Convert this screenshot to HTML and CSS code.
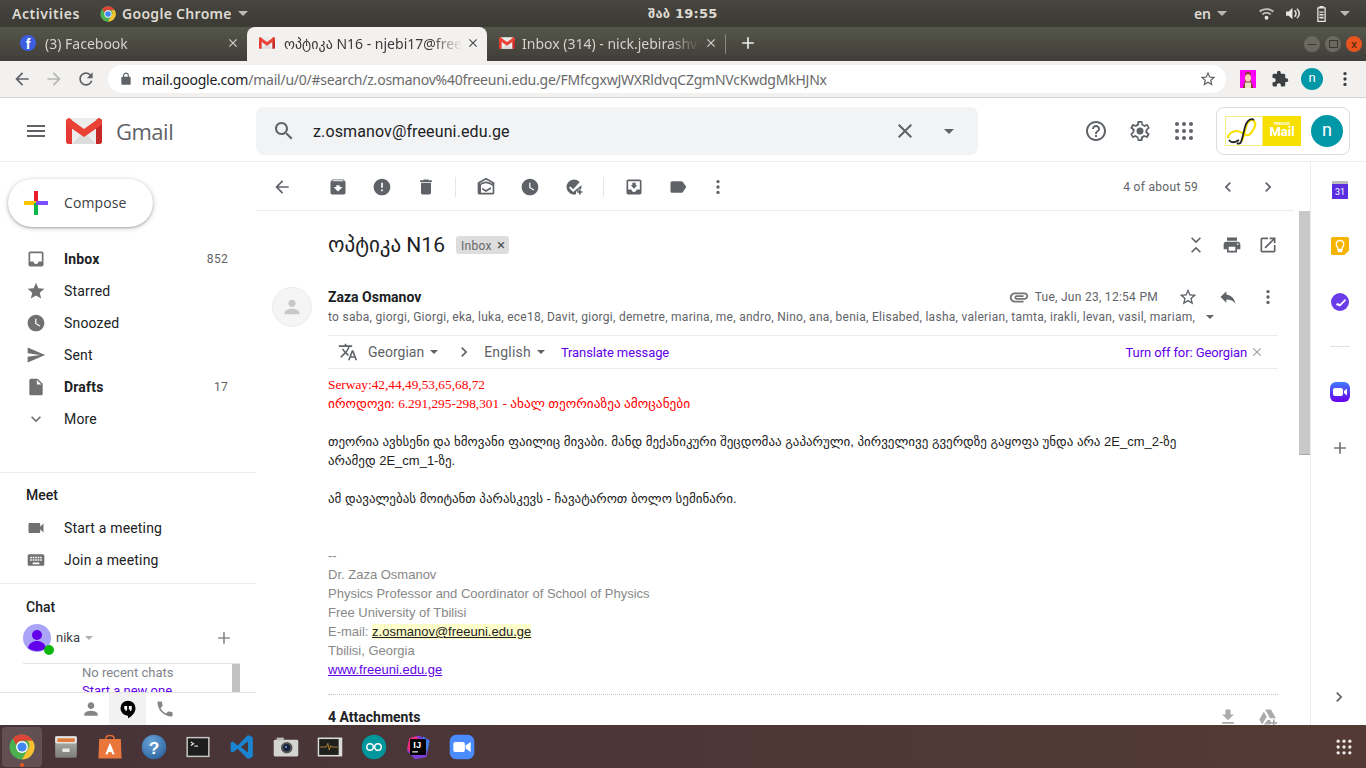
FILE: index.html
```html
<!DOCTYPE html>
<html lang="en">
<head>
    <meta charset="UTF-8">
    <title>ოპტიკა N16 - Gmail</title>
    <link rel="stylesheet" href="styles.css">
</head>
<body>
    <!-- icon sprite -->
    <svg class="sprite" xmlns="http://www.w3.org/2000/svg">
        <defs>
            <linearGradient id="zoom-grad" x1="0" y1="0" x2="0" y2="1"><stop offset="0" stop-color="#3f7bff"/><stop offset="1" stop-color="#6a00f0"/></linearGradient>
            <radialGradient id="help-grad" cx=".4" cy=".3" r=".8"><stop offset="0" stop-color="#6aa3d8"/><stop offset="1" stop-color="#2a639c"/></radialGradient>
            <linearGradient id="files-grad" x1="0" y1="0" x2="0" y2="1"><stop offset="0" stop-color="#b5b5b1"/><stop offset="1" stop-color="#7d7d79"/></linearGradient>
        </defs>
        <symbol id="i-menu" viewBox="0 0 24 24"><path d="M3 18h18v-2H3v2zm0-5h18v-2H3v2zm0-7v2h18V6H3z"/></symbol>
        <symbol id="i-search" viewBox="0 0 24 24"><path d="M15.5 14h-.79l-.28-.27C15.41 12.59 16 11.11 16 9.5 16 5.91 13.09 3 9.5 3S3 5.91 3 9.5 5.91 16 9.5 16c1.61 0 3.09-.59 4.23-1.57l.27.28v.79l5 4.99L20.49 19l-4.99-5zm-6 0C7.01 14 5 11.99 5 9.5S7.01 5 9.5 5 14 7.01 14 9.5 11.99 14 9.5 14z"/></symbol>
        <symbol id="i-close" viewBox="0 0 24 24"><path d="M19 6.41L17.59 5 12 10.59 6.41 5 5 6.41 10.59 12 5 17.59 6.41 19 12 13.41 17.59 19 19 17.59 13.41 12z"/></symbol>
        <symbol id="i-back" viewBox="0 0 24 24"><path d="M20 11H7.83l5.59-5.59L12 4l-8 8 8 8 1.41-1.41L7.83 13H20v-2z"/></symbol>
        <symbol id="i-forward" viewBox="0 0 24 24"><path d="M12 4l-1.41 1.41L16.17 11H4v2h12.17l-5.58 5.59L12 20l8-8z"/></symbol>
        <symbol id="i-refresh" viewBox="0 0 24 24"><path d="M17.65 6.35C16.2 4.9 14.21 4 12 4c-4.42 0-7.99 3.58-7.99 8s3.57 8 7.99 8c3.73 0 6.84-2.55 7.73-6h-2.08c-.82 2.33-3.04 4-5.65 4-3.31 0-6-2.69-6-6s2.69-6 6-6c1.66 0 3.14.69 4.22 1.78L13 11h7V4l-2.35 2.35z"/></symbol>
        <symbol id="i-star" viewBox="0 0 24 24"><path d="M12 17.27L18.18 21l-1.64-7.03L22 9.24l-7.19-.61L12 2 9.19 8.63 2 9.24l5.46 4.73L5.82 21z"/></symbol>
        <symbol id="i-star-o" viewBox="0 0 24 24"><path d="M22 9.24l-7.19-.62L12 2 9.19 8.63 2 9.24l5.46 4.73L5.82 21 12 17.27 18.18 21l-1.63-7.03L22 9.24zM12 15.4l-3.76 2.27 1-4.28-3.32-2.88 4.38-.38L12 6.1l1.71 4.04 4.38.38-3.32 2.88 1 4.28L12 15.4z"/></symbol>
        <symbol id="i-lock" viewBox="0 0 24 24"><path d="M18 8h-1V6c0-2.76-2.24-5-5-5S7 3.24 7 6v2H6c-1.1 0-2 .9-2 2v10c0 1.1.9 2 2 2h12c1.1 0 2-.9 2-2V10c0-1.1-.9-2-2-2zM9 6c0-1.66 1.34-3 3-3s3 1.34 3 3v2H9V6z"/></symbol>
        <symbol id="i-puzzle" viewBox="0 0 24 24"><path d="M20.5 11H19V7c0-1.1-.9-2-2-2h-4V3.5C13 2.12 11.88 1 10.5 1S8 2.12 8 3.5V5H4c-1.1 0-1.99.9-1.99 2v3.8H3.5c1.49 0 2.7 1.21 2.7 2.7s-1.21 2.7-2.7 2.7H2V20c0 1.1.9 2 2 2h3.8v-1.5c0-1.49 1.21-2.7 2.7-2.7 1.49 0 2.7 1.21 2.7 2.7V22H17c1.1 0 2-.9 2-2v-4h1.5c1.38 0 2.5-1.12 2.5-2.5S21.88 11 20.5 11z"/></symbol>
        <symbol id="i-more" viewBox="0 0 24 24"><circle cx="12" cy="5.5" r="2"/><circle cx="12" cy="12" r="2"/><circle cx="12" cy="18.5" r="2"/></symbol>
        <symbol id="i-help" viewBox="0 0 24 24"><path d="M11 18h2v-2h-2v2zm1-16C6.48 2 2 6.48 2 12s4.48 10 10 10 10-4.48 10-10S17.52 2 12 2zm0 18c-4.41 0-8-3.59-8-8s3.59-8 8-8 8 3.59 8 8-3.59 8-8 8zm0-14c-2.21 0-4 1.79-4 4h2c0-1.1.9-2 2-2s2 .9 2 2c0 2-3 1.75-3 5h2c0-2.25 3-2.5 3-5 0-2.21-1.79-4-4-4z"/></symbol>
        <symbol id="i-gear" viewBox="0 0 24 24"><path fill-rule="evenodd" d="M19.43 12.98c.04-.32.07-.64.07-.98s-.03-.66-.07-.98l2.11-1.65c.19-.15.24-.42.12-.64l-2-3.46c-.12-.22-.39-.3-.61-.22l-2.49 1c-.52-.4-1.08-.73-1.69-.98l-.38-2.65C14.46 2.18 14.25 2 14 2h-4c-.25 0-.46.18-.49.42l-.38 2.65c-.61.25-1.17.59-1.69.98l-2.49-1c-.23-.09-.49 0-.61.22l-2 3.46c-.13.22-.07.49.12.64l2.11 1.65c-.04.32-.07.65-.07.98s.03.66.07.98l-2.11 1.65c-.19.15-.24.42-.12.64l2 3.46c.12.22.39.3.61.22l2.49-1c.52.4 1.08.73 1.69.98l.38 2.65c.03.24.24.42.49.42h4c.25 0 .46-.18.49-.42l.38-2.65c.61-.25 1.17-.59 1.69-.98l2.49 1c.23.09.49 0 .61-.22l2-3.46c.12-.22.07-.49-.12-.64l-2.11-1.65zM17.4 11.2c.05.3.07.55.07.8s-.02.5-.07.8l-.14.9 2.02 1.58-.96 1.66-2.38-.96-.76.58c-.44.33-.86.58-1.28.75l-.88.36-.36 2.53h-1.9l-.36-2.53-.88-.36c-.44-.18-.86-.42-1.26-.73l-.78-.6-2.38.96-.96-1.66 2.02-1.58-.14-.9C6.52 12.5 6.5 12.24 6.5 12s.02-.5.07-.8l.14-.9-2.02-1.58.96-1.66 2.38.96.76-.58c.44-.33.86-.58 1.28-.75l.88-.36.36-2.53h1.9l.36 2.53.88.36c.44.18.86.42 1.26.73l.78.6 2.38-.96.96 1.66-2.02 1.58.14.9z"/><circle cx="12" cy="12" r="3.5"/></symbol>
        <symbol id="i-apps" viewBox="0 0 24 24"><circle cx="5" cy="5" r="2"/><circle cx="12" cy="5" r="2"/><circle cx="19" cy="5" r="2"/><circle cx="5" cy="12" r="2"/><circle cx="12" cy="12" r="2"/><circle cx="19" cy="12" r="2"/><circle cx="5" cy="19" r="2"/><circle cx="12" cy="19" r="2"/><circle cx="19" cy="19" r="2"/></symbol>
        <symbol id="i-inbox" viewBox="0 0 24 24"><path d="M19 3H5c-1.1 0-2 .9-2 2v14c0 1.1.9 2 2 2h14c1.1 0 2-.9 2-2V5c0-1.1-.9-2-2-2zm0 12h-4c0 1.66-1.34 3-3 3s-3-1.34-3-3H5V5h14v10z"/></symbol>
        <symbol id="i-clock" viewBox="0 0 24 24"><path d="M12 2C6.5 2 2 6.5 2 12s4.5 10 10 10 10-4.5 10-10S17.5 2 12 2zm4.2 14.2L11 13V7h1.5v5.2l4.5 2.7-.8 1.3z"/></symbol>
        <symbol id="i-send" viewBox="0 0 24 24"><path d="M2.01 21L23 12 2.01 3 2 10l15 2-15 2z"/></symbol>
        <symbol id="i-file" viewBox="0 0 24 24"><path d="M6 2c-1.1 0-1.99.9-1.99 2L4 20c0 1.1.89 2 1.99 2H18c1.1 0 2-.9 2-2V8l-6-6H6zm7 7V3.5L18.5 9H13z"/></symbol>
        <symbol id="i-expand" viewBox="0 0 24 24"><path d="M16.59 8.59L12 13.17 7.41 8.59 6 10l6 6 6-6z"/></symbol>
        <symbol id="i-left" viewBox="0 0 24 24"><path d="M15.41 7.41L14 6l-6 6 6 6 1.41-1.41L10.83 12z"/></symbol>
        <symbol id="i-right" viewBox="0 0 24 24"><path d="M10 6L8.59 7.41 13.17 12l-4.58 4.59L10 18l6-6z"/></symbol>
        <symbol id="i-video" viewBox="0 0 24 24"><path d="M17 10.5V7c0-.55-.45-1-1-1H4c-.55 0-1 .45-1 1v10c0 .55.45 1 1 1h12c.55 0 1-.45 1-1v-3.5l4 4v-11l-4 4z"/></symbol>
        <symbol id="i-keyboard" viewBox="0 0 24 24"><path d="M20 5H4c-1.1 0-1.99.9-1.99 2L2 17c0 1.1.9 2 2 2h16c1.1 0 2-.9 2-2V7c0-1.1-.9-2-2-2zm-9 3h2v2h-2V8zm0 3h2v2h-2v-2zM8 8h2v2H8V8zm0 3h2v2H8v-2zm-1 2H5v-2h2v2zm0-3H5V8h2v2zm9 7H8v-2h8v2zm0-4h-2v-2h2v2zm0-3h-2V8h2v2zm3 3h-2v-2h2v2zm0-3h-2V8h2v2z"/></symbol>
        <symbol id="i-person" viewBox="0 0 24 24"><path d="M12 12c2.21 0 4-1.79 4-4s-1.79-4-4-4-4 1.79-4 4 1.79 4 4 4zm0 2c-2.67 0-8 1.34-8 4v2h16v-2c0-2.66-5.33-4-8-4z"/></symbol>
        <symbol id="i-phone" viewBox="0 0 24 24"><path d="M6.62 10.79c1.44 2.83 3.76 5.14 6.59 6.59l2.2-2.2c.27-.27.67-.36 1.02-.24 1.12.37 2.33.57 3.57.57.55 0 1 .45 1 1V20c0 .55-.45 1-1 1-9.39 0-17-7.61-17-17 0-.55.45-1 1-1h3.5c.55 0 1 .45 1 1 0 1.25.2 2.45.57 3.57.11.35.03.74-.25 1.02l-2.2 2.2z"/></symbol>
        <symbol id="i-plus" viewBox="0 0 24 24"><path d="M19 13h-6v6h-2v-6H5v-2h6V5h2v6h6v2z"/></symbol>
        <symbol id="i-archive" viewBox="0 0 24 24"><path d="M20.54 5.23l-1.39-1.68C18.88 3.21 18.47 3 18 3H6c-.47 0-.88.21-1.16.55L3.46 5.23C3.17 5.57 3 6.02 3 6.5V19c0 1.1.9 2 2 2h14c1.1 0 2-.9 2-2V6.5c0-.48-.17-.93-.46-1.27zM12 17.5L6.5 12H10v-2h4v2h3.5L12 17.5zM5.12 5l.81-1h12l.94 1H5.12z"/></symbol>
        <symbol id="i-report" viewBox="0 0 24 24"><path d="M12 2C6.48 2 2 6.48 2 12s4.48 10 10 10 10-4.48 10-10S17.52 2 12 2zm1 15h-2v-2h2v2zm0-4h-2V7h2v6z"/></symbol>
        <symbol id="i-delete" viewBox="0 0 24 24"><path d="M6 19c0 1.1.9 2 2 2h8c1.1 0 2-.9 2-2V7H6v12zM19 4h-3.5l-1-1h-5l-1 1H5v2h14V4z"/></symbol>
        <symbol id="i-drafts" viewBox="0 0 24 24"><path d="M12 1L2 6.6V19c0 1.1.9 2 2 2h16c1.1 0 2-.9 2-2V6.6L12 1zm0 2.3l7.6 4.2-.6.5c-1.9-1.3-4.4-2.5-7-2.500S6.9 6.7 5 8l-.6-.5L12 3.3zM20 19H6V9.7c1.8-1.2 3.9-2.200 6-2.200s4.800 1.100 8 3.200V19zm-2-7l-6 3.600L7.500 13v2.200l4.500 2.700 6-3.600V12z"/></symbol>
        <symbol id="i-addtask" viewBox="0 0 24 24"><path d="M12 3a9 9 0 1 0 2.500 17.650V17h3v-2.500h2.900c.4-.8.6-1.600.6-2.500 0-.7-.1-1.300-.2-2L11 18l-5-5 1.700-1.700 3.300 3.300 7.900-8.500A9 9 0 0 0 12 3zM18 17v-2h2v2h2v2h-2v2h-2v-2h-2v-2h2z"/></symbol>
        <symbol id="i-moveto" viewBox="0 0 24 24"><path d="M19 3H4.990c-1.110 0-1.980.89-1.980 2L3 19c0 1.100.88 2 1.990 2H19c1.100 0 2-.9 2-2V5c0-1.110-.9-2-2-2zm0 12h-4c0 1.660-1.350 3-3 3s-3-1.340-3-3H4.990V5H19v10zm-3-5h-2V7h-4v3H8l4 4 4-4z"/></symbol>
        <symbol id="i-label" viewBox="0 0 24 24"><path d="M17.630 5.840C17.270 5.330 16.670 5 16 5L5 5.010C3.900 5.010 3 5.900 3 7v10c0 1.100.9 1.990 2 1.990L16 19c.67 0 1.270-.33 1.630-.84L22 12l-4.370-6.160z"/></symbol>
        <symbol id="i-reply" viewBox="0 0 24 24"><path d="M10 9V5l-7 7 7 7v-4.100c5 0 8.500 1.600 11 5.100-1-5-4-10-11-11z"/></symbol>
        <symbol id="i-print" viewBox="0 0 24 24"><path d="M19 8H5c-1.660 0-3 1.340-3 3v6h4v4h12v-4h4v-6c0-1.660-1.340-3-3-3zm-3 11H8v-5h8v5zm3-7c-.55 0-1-.45-1-1s.45-1 1-1 1 .45 1 1-.45 1-1 1zm-1-9H6v4h12V3z"/></symbol>
        <symbol id="i-open" viewBox="0 0 24 24"><path d="M19 19H5V5h7V3H5c-1.110 0-2 .9-2 2v14c0 1.100.89 2 2 2h14c1.100 0 2-.9 2-2v-7h-2v7zM14 3v2h3.590l-9.830 9.830 1.410 1.410L19 6.410V10h2V3h-7z"/></symbol>
        <symbol id="i-clip" viewBox="0 0 24 24"><path d="M2 12.500C2 9.460 4.460 7 7.500 7H18c2.210 0 4 1.790 4 4s-1.790 4-4 4H9.500C8.120 15 7 13.880 7 12.500S8.120 10 9.500 10H17v2H9.410c-.55 0-.55 1 0 1H18c1.100 0 2-.9 2-2s-.9-2-2-2H7.500C5.570 9 4 10.570 4 12.500S5.570 16 7.500 16H17v2H7.500C4.460 18 2 15.540 2 12.500z"/></symbol>
        <symbol id="i-translate" viewBox="0 0 24 24"><path d="M12.870 15.070l-2.540-2.510.03-.03c1.740-1.940 2.980-4.170 3.710-6.530H17V4h-7V2H8v2H1v1.990h11.170C11.500 7.920 10.440 9.750 9 11.350 8.070 10.320 7.300 9.190 6.690 8h-2c.73 1.630 1.730 3.170 2.980 4.560l-5.090 5.020L4 19l5-5 3.110 3.110.76-2.040zM18.500 10h-2L12 22h2l1.120-3h4.750L21 22h2l-4.500-12zm-2.620 7l1.620-4.330L19.120 17h-3.240z"/></symbol>
        <symbol id="i-download" viewBox="0 0 24 24"><path d="M19 9h-4V3H9v6H5l7 7 7-7zM5 18v2h14v-2H5z"/></symbol>
        <symbol id="i-drive" viewBox="0 0 24 24"><path d="M8.500 3h7l6 10.500h-7zM7 5.600l3.500 6L5 21l-3.500-6zM11.500 15.500H15V21H7zM18 15h2v3h3v2h-3v3h-2v-3h-3v-2h3z"/></symbol>
        <symbol id="i-m" viewBox="0 0 36 26"><path fill="#ececec" d="M3 0h30v26H3z"/><path fill="#dcdcdc" d="M6 26L18 14l12 12z"/><path fill="#e53935" d="M0 3C0 1 2 0 3.500 .3L6 2v24H2.500C1 26 0 25 0 23.500z"/><path fill="#c62828" d="M36 3c0-2-2-3-3.500-2.700L30 2v24h3.500c1.500 0 2.500-1 2.500-2.500z"/><path fill="#ea4335" d="M3 .2L18 11 33 .2 36 3v3.500L18 19 0 6.500V3z"/></symbol>
        <symbol id="i-chrome" viewBox="0 0 48 48"><circle cx="24" cy="24" r="23" fill="#4caf50"/><path fill="#db4437" d="M24 1a23 23 0 0 1 20 11.500H24a11.500 11.500 0 0 0-10.800 7.600L7 8A23 23 0 0 1 24 1z"/><path fill="#fbc02d" d="M44 12.500A23 23 0 0 1 24 47l9.800-17a11.500 11.500 0 0 0 0-17.500z"/><circle cx="24" cy="24" r="11" fill="#fff"/><circle cx="24" cy="24" r="8.500" fill="#4285f4"/></symbol>
    </svg>

    <div class="topbar">
        <span class="activities">Activities</span>
        <span class="app-menu">
            <svg class="app-chrome"><use href="#i-chrome"/></svg>
            <span class="app-name">Google Chrome</span>
            <span class="tri"></span>
        </span>
        <span class="clock">შაბ 19:55</span>
        <span class="tray">
            <span class="lang">en</span>
            <span class="tri"></span>
            <svg class="tray-wifi" viewBox="0 0 16 16"><path d="M8 3C5 3 2.500 4 1 5.500L2.200 7C3.600 5.700 5.700 4.800 8 4.800s4.400.9 5.800 2.200L15 5.500C13.500 4 11 3 8 3zM8 6.500c-1.800 0-3.300.6-4.400 1.700L4.800 9.600C5.700 8.800 6.800 8.300 8 8.300s2.300.5 3.200 1.300l1.200-1.400C11.300 7.100 9.800 6.500 8 6.500z" opacity=".75"/><circle cx="8" cy="12" r="1.800"/></svg>
            <svg class="tray-vol" viewBox="0 0 16 16"><path d="M1 6h2.500L7 2.500v11L3.500 10H1z"/><path d="M9 5c1 .8 1.400 1.800 1.400 3s-.4 2.200-1.400 3M11.200 3.500c1.500 1.200 2.200 2.700 2.200 4.500s-.7 3.300-2.200 4.500" fill="none" stroke="#e8e6e1" stroke-width="1.400"/></svg>
            <svg class="tray-bat" viewBox="0 0 16 16"><path fill-rule="evenodd" d="M6 1h4v1h2v14H4V2h2zM5.200 3.200v11.600h5.600V3.200z"/><path d="M6 6h4v1.400H6zM6 8.500h4v1.400H6zM6 11h4v1.600H6z"/></svg>
            <span class="tri"></span>
        </span>
    </div>

    <div class="tabstrip">
        <div class="tab tab-fb">
            <span class="fav-fb">f</span>
            <span class="tab-title">(3) Facebook</span>
            <svg class="ic tab-x"><use href="#i-close"/></svg>
        </div>
        <div class="tab tab-active">
            <svg class="fav-m"><use href="#i-m"/></svg>
            <span class="tab-title">ოპტიკა N16 - njebi17@freeuni.edu.ge</span>
            <svg class="ic tab-x"><use href="#i-close"/></svg>
        </div>
        <div class="tab tab-third">
            <svg class="fav-m"><use href="#i-m"/></svg>
            <span class="tab-title">Inbox (314) - nick.jebirashvili@gmail.com</span>
            <svg class="ic tab-x"><use href="#i-close"/></svg>
        </div>
        <span class="tab-sep"></span>
        <svg class="ic new-tab"><use href="#i-plus"/></svg>
        <div class="win-btns">
            <span class="win-btn"><i class="w-min"></i></span>
            <span class="win-btn"><i class="w-max"></i></span>
            <span class="win-btn win-close">x</span>
        </div>
    </div>

    <div class="toolbar">
        <svg class="ic nav-btn"><use href="#i-back"/></svg>
        <svg class="ic nav-btn nav-off"><use href="#i-forward"/></svg>
        <svg class="ic nav-btn"><use href="#i-refresh"/></svg>
        <div class="omnibox">
            <svg class="ic omni-lock"><use href="#i-lock"/></svg>
            <span class="url"><b>mail.google.com</b>/mail/u/0/#search/z.osmanov%40freeuni.edu.ge/FMfcgxwJWXRldvqCZgmNVcKwdgMkHJNx</span>
            <svg class="ic omni-star"><use href="#i-star-o"/></svg>
        </div>
        <span class="ext-pic">
            <svg viewBox="0 0 16 18"><rect width="16" height="18" fill="#f0f"/><path d="M3 18c0-3 1-5 2-6V6c0-3 1.500-4.500 3-4.500S11 3 11 6v6c1 1 2 3 2 6z" fill="#8c3b2e"/><ellipse cx="8" cy="8" rx="3" ry="3.800" fill="#f4d3b8"/><rect x="5" y="12.500" width="6" height="5.500" fill="#e8e2c8"/></svg>
        </span>
        <svg class="ic ext-puzzle"><use href="#i-puzzle"/></svg>
        <span class="chrome-avatar">n</span>
        <svg class="ic chrome-more"><use href="#i-more"/></svg>
    </div>

    <div class="gmail">
        <header class="g-head">
            <svg class="ic g-menu"><use href="#i-menu"/></svg>
            <svg class="g-logo"><use href="#i-m"/></svg>
            <span class="g-word">Gmail</span>
            <div class="g-search">
                <svg class="ic"><use href="#i-search"/></svg>
                <span class="g-query">z.osmanov@freeuni.edu.ge</span>
                <svg class="ic g-clear"><use href="#i-close"/></svg>
                <span class="g-caret"></span>
            </div>
            <svg class="ic g-act g-help"><use href="#i-help"/></svg>
            <svg class="ic g-act"><use href="#i-gear"/></svg>
            <svg class="ic g-act"><use href="#i-apps"/></svg>
            <div class="g-account">
                <div class="fu-logo">
                    <span class="fu-mark">
                        <svg viewBox="0 0 36 28"><path d="M2 21c0-4 4-7 9-7 6 0 9 8 14 2 4-5 6-9 3-12-2-2-5-1-7 3-2 5-3 12-5 17" fill="none" stroke="#f7e000" stroke-width="2.200"/><path d="M28 3c-3-2-6 0-8 4-2 5-3 13-5 18-1 2-3 2-4 1M3 23c2 3 6 3 10 0" fill="none" stroke="#222" stroke-width="1.800"/></svg>
                    </span>
                    <span class="fu-mail"><small>FREEUNI</small>Mail</span>
                </div>
                <span class="acc-avatar">n</span>
            </div>
        </header>

        <div class="g-main">
            <aside class="sidebar">
                <div class="compose">
                    <svg class="compose-plus" viewBox="0 0 24 24"><rect x="10" width="4" height="12" fill="#ea1d2c"/><rect y="10" width="12" height="4" fill="#fbc400"/><rect x="10" y="12" width="4" height="12" fill="#0ab54a"/><rect x="12" y="10" width="12" height="4" fill="#7c4dff"/></svg>
                    <span>Compose</span>
                </div>
                <nav class="nav">
                    <a class="nav-row strong"><svg class="ic"><use href="#i-inbox"/></svg><span>Inbox</span><em>852</em></a>
                    <a class="nav-row"><svg class="ic"><use href="#i-star"/></svg><span>Starred</span></a>
                    <a class="nav-row"><svg class="ic"><use href="#i-clock"/></svg><span>Snoozed</span></a>
                    <a class="nav-row"><svg class="ic"><use href="#i-send"/></svg><span>Sent</span></a>
                    <a class="nav-row strong"><svg class="ic"><use href="#i-file"/></svg><span>Drafts</span><em>17</em></a>
                    <a class="nav-row"><svg class="ic"><use href="#i-expand"/></svg><span>More</span></a>
                </nav>
                <div class="meet">
                    <h3>Meet</h3>
                    <a class="nav-row"><svg class="ic"><use href="#i-video"/></svg><span>Start a meeting</span></a>
                    <a class="nav-row"><svg class="ic"><use href="#i-keyboard"/></svg><span>Join a meeting</span></a>
                </div>
                <div class="chat">
                    <h3>Chat</h3>
                    <div class="chat-me">
                        <span class="me-pic">
                            <svg viewBox="0 0 28 28"><circle cx="14" cy="14" r="14" fill="#a9a4f7"/><circle cx="14" cy="11" r="5" fill="#6200ea"/><path d="M5 24c1-5 5-7 9-7s8 2 9 7c-2.500 2-5.500 3-9 3s-6.500-1-9-3z" fill="#6200ea"/></svg>
                            <i class="me-dot"></i>
                        </span>
                        <span class="me-name">nika</span>
                        <span class="me-caret"></span>
                        <svg class="ic me-add"><use href="#i-plus"/></svg>
                    </div>
                    <div class="chat-list">
                        <div class="chat-msgs">
                            <p>No recent chats</p>
                            <a>Start a new one</a>
                        </div>
                        <span class="chat-scroll"></span>
                    </div>
                </div>
                <div class="side-tabs">
                    <span><svg class="ic"><use href="#i-person"/></svg></span>
                    <span class="on">
                        <svg viewBox="0 0 24 24"><path d="M12 2a9 9 0 0 0-9 9c0 5 4 8.500 9 9v3c5-2.500 9-7 9-12a9 9 0 0 0-9-9z" fill="#000"/><path d="M7.500 8.500h3.500v3.500c0 1.500-.8 2.500-2 2.800v-2.300H7.500zM13 8.500h3.500v3.500c0 1.500-.8 2.500-2 2.800v-2.300H13z" fill="#fff"/></svg>
                    </span>
                    <span><svg class="ic"><use href="#i-phone"/></svg></span>
                </div>
            </aside>

            <main class="content">
                <div class="actions">
                    <span class="btn btn-back"><svg class="ic"><use href="#i-back"/></svg></span>
                    <span class="btn"><svg class="ic"><use href="#i-archive"/></svg></span>
                    <span class="btn"><svg class="ic"><use href="#i-report"/></svg></span>
                    <span class="btn"><svg class="ic"><use href="#i-delete"/></svg></span>
                    <span class="act-sep"></span>
                    <span class="btn"><svg class="ic"><use href="#i-drafts"/></svg></span>
                    <span class="btn"><svg class="ic"><use href="#i-clock"/></svg></span>
                    <span class="btn"><svg class="ic"><use href="#i-addtask"/></svg></span>
                    <span class="act-sep"></span>
                    <span class="btn"><svg class="ic"><use href="#i-moveto"/></svg></span>
                    <span class="btn"><svg class="ic"><use href="#i-label"/></svg></span>
                    <span class="btn btn-more"><svg class="ic"><use href="#i-more"/></svg></span>
                    <span class="count">4 of about 59</span>
                    <span class="btn btn-page"><svg class="ic"><use href="#i-left"/></svg></span>
                    <span class="btn btn-page"><svg class="ic"><use href="#i-right"/></svg></span>
                </div>

                <div class="thread-wrap">
                    <div class="thread">
                        <div class="subject-row">
                            <h2>ოპტიკა N16</h2>
                            <span class="chip">Inbox <i>×</i></span>
                            <span class="sub-tools">
                                <svg class="ic collapse" viewBox="0 0 24 24"><path d="M7.400 2.600L6 4l6 6 6-6-1.400-1.400L12 7.200zM7.400 21.400L6 20l6-6 6 6-1.400 1.400L12 16.800z"/></svg>
                                <svg class="ic"><use href="#i-print"/></svg>
                                <svg class="ic"><use href="#i-open"/></svg>
                            </span>
                        </div>

                        <div class="message">
                            <span class="sender-pic"><svg class="ic"><use href="#i-person"/></svg></span>
                            <div class="msg-main">
                                <div class="from-row">
                                    <b class="sender">Zaza Osmanov</b>
                                    <svg class="ic clip"><use href="#i-clip"/></svg>
                                    <span class="date">Tue, Jun 23, 12:54 PM</span>
                                    <svg class="ic msg-star"><use href="#i-star-o"/></svg>
                                    <svg class="ic msg-reply"><use href="#i-reply"/></svg>
                                    <svg class="ic msg-more"><use href="#i-more"/></svg>
                                </div>
                                <div class="to-row">
                                    <span>to saba, giorgi, Giorgi, eka, luka, ece18, Davit, giorgi, demetre, marina, me, andro, Nino, ana, benia, Elisabed, lasha, valerian, tamta, irakli, levan, vasil, mariam,</span>
                                    <i class="to-caret"></i>
                                </div>

                                <div class="translate">
                                    <svg class="ic tr-icon"><use href="#i-translate"/></svg>
                                    <span class="tr-lang tr-from">Georgian</span><i class="tr-caret"></i>
                                    <svg class="ic tr-arrow"><use href="#i-right"/></svg>
                                    <span class="tr-lang tr-to">English</span><i class="tr-caret"></i>
                                    <a class="tr-link">Translate message</a>
                                    <a class="tr-link tr-off">Turn off for: Georgian</a>
                                    <svg class="ic tr-x"><use href="#i-close"/></svg>
                                </div>

                                <div class="body">
                                    <div class="red">Serway:42,44,49,53,65,68,72<br>იროდოვი: 6.291,295-298,301 - ახალ თეორიაზეა ამოცანები</div>
                                    <br>
                                    <div>თეორია ავხსენი და ხმოვანი ფაილიც მივაბი. მანდ მექანიკური შეცდომაა გაპარული, პირველივე გვერდზე გაყოფა უნდა არა 2E_cm_2-ზე<br>არამედ 2E_cm_1-ზე.</div>
                                    <br>
                                    <div>ამ დავალებას მოიტანთ პარასკევს - ჩავატაროთ ბოლო სემინარი.</div>
                                    <br><br>
                                    <div class="sig">
                                        --<br>
                                        Dr. Zaza Osmanov<br>
                                        Physics Professor and Coordinator of School of Physics<br>
                                        Free University of Tbilisi<br>
                                        E-mail: <a class="hl">z.osmanov@freeuni.edu.ge</a><br>
                                        Tbilisi, Georgia<br>
                                        <a class="site">www.freeuni.edu.ge</a>
                                    </div>
                                </div>

                                <div class="attach">
                                    <b>4 Attachments</b>
                                    <svg class="ic att-dl"><use href="#i-download"/></svg>
                                    <svg class="ic att-drive"><use href="#i-drive"/></svg>
                                </div>
                            </div>
                        </div>
                    </div>
                    <div class="scroll-track"><span class="scroll-thumb"></span></div>
                </div>
            </main>

            <aside class="addons">
                <span class="addon">
                    <svg viewBox="0 0 16 18"><rect y="0" width="16" height="5" fill="#bdbdbd"/><rect y="3" width="16" height="15" fill="#5a2de0"/><text x="8" y="14" text-anchor="middle" class="cal-num">31</text></svg>
                </span>
                <span class="addon">
                    <svg viewBox="0 0 16 16"><path d="M0 1.500C0 .7.700 0 1.500 0h13c.8 0 1.500.7 1.500 1.500V12l-4 4H1.500C.7 16 0 15.300 0 14.500z" fill="#f4b400"/><path d="M8 3a3.500 3.500 0 0 0-2 6.300V11h4V9.300A3.500 3.500 0 0 0 8 3zM6.500 12h3v1h-3z" fill="none" stroke="#fff" stroke-width="1"/></svg>
                </span>
                <span class="addon">
                    <svg viewBox="0 0 18 18"><circle cx="9" cy="9" r="9" fill="#6a3de8"/><path d="M5 12l1-2 3 1 5-5 1 1.500-6 6z" fill="#fff"/></svg>
                </span>
                <span class="addon-hr"></span>
                <span class="addon addon-zoom">
                    <svg viewBox="0 0 20 20"><rect width="20" height="20" rx="6" fill="url(#zoom-grad)"/><rect x="3" y="6" width="10" height="8" rx="2" fill="#fff"/><path d="M14 9l3-2.500v7L14 11z" fill="#fff"/></svg>
                </span>
                <svg class="ic addon-plus"><use href="#i-plus"/></svg>
                <svg class="ic addon-chev"><use href="#i-right"/></svg>
            </aside>
        </div>
    </div>

    <div class="dock">
        <span class="dock-item dock-on"><svg><use href="#i-chrome"/></svg><i class="dock-dot"></i></span>
        <span class="dock-item">
            <svg viewBox="0 0 36 36"><rect x="3" y="3" width="30" height="30" rx="3" fill="url(#files-grad)"/><rect x="3" y="3" width="30" height="10" rx="2" fill="#e2e2e0"/><rect x="6" y="6" width="24" height="5" fill="#e07a3a"/><rect x="13" y="20" width="10" height="5" rx="1" fill="#e8e8e6"/></svg>
        </span>
        <span class="dock-item">
            <svg viewBox="0 0 36 36"><path d="M12 10V7c0-3 2-5 6-5s6 2 6 5v3" fill="none" stroke="#e06b33" stroke-width="2"/><path d="M3 7h30l1 27H2z" fill="#e9773c"/><path d="M18 12l6.500 16h-3.500l-1-3h-4l-1 3h-3.500z" fill="#fff"/></svg>
        </span>
        <span class="dock-item">
            <svg viewBox="0 0 36 36"><circle cx="18" cy="18" r="17" fill="url(#help-grad)"/><text x="18" y="27" text-anchor="middle" class="help-q">?</text></svg>
        </span>
        <span class="dock-item">
            <svg viewBox="0 0 36 36"><rect x="2" y="4" width="32" height="28" fill="#c9c9c6"/><rect x="4" y="6" width="28" height="24" fill="#1d1d1d"/><path d="M8 11l4 2.500L8 16" fill="none" stroke="#eee" stroke-width="1.500"/><rect x="13" y="16" width="5" height="1.500" fill="#eee"/></svg>
        </span>
        <span class="dock-item">
            <svg viewBox="0 0 24 24"><path d="M17.500 1L8 10.500 3.500 7 1.500 8v8l2 1L8 13.500 17.500 23l4.500-2V3zM17.500 7v10L11 12z" fill="#1a84d0" fill-rule="evenodd"/></svg>
        </span>
        <span class="dock-item">
            <svg viewBox="0 0 36 36"><rect x="1" y="8" width="34" height="23" rx="2" fill="#d4d4d2"/><rect x="5" y="5" width="10" height="4" fill="#bcbcba"/><circle cx="19" cy="19" r="8" fill="#555"/><circle cx="19" cy="19" r="5" fill="#16233a"/><circle cx="18" cy="18" r="1.500" fill="#7fa2d6"/></svg>
        </span>
        <span class="dock-item">
            <svg viewBox="0 0 36 36"><rect x="1" y="5" width="34" height="26" rx="1" fill="#dcdcd8"/><rect x="3" y="7" width="27" height="22" fill="#20201e"/><path d="M4 18h9l2-5 2 9 2-6 1 2h9" fill="none" stroke="#d8a23c" stroke-width="1"/></svg>
        </span>
        <span class="dock-item">
            <svg viewBox="0 0 36 36"><circle cx="18" cy="18" r="17" fill="#00979c"/><circle cx="12.500" cy="18" r="4.500" fill="none" stroke="#fff" stroke-width="2"/><circle cx="23.500" cy="18" r="4.500" fill="none" stroke="#fff" stroke-width="2"/></svg>
        </span>
        <span class="dock-item">
            <svg viewBox="0 0 36 36"><path d="M6 6l12-4 16 6-4 24-16 3L3 24z" fill="#7a3fd6"/><path d="M3 20L6 6l10-3 4 6-14 16z" fill="#f02d74"/><path d="M25 3l9 7-3 14-6-2z" fill="#3d7fe8"/><rect x="7" y="7" width="22" height="22" fill="#000"/><text x="17" y="20" text-anchor="middle" class="ij">IJ</text><rect x="10" y="24" width="8" height="1.500" fill="#fff"/></svg>
        </span>
        <span class="dock-item">
            <svg viewBox="0 0 36 36"><rect x="1" y="1" width="34" height="34" rx="9" fill="#4a8cff"/><rect x="6" y="11" width="16" height="14" rx="3" fill="#fff"/><path d="M23 16l7-5v14l-7-5z" fill="#fff"/></svg>
        </span>
        <svg class="ic dock-grid"><use href="#i-apps"/></svg>
    </div>
</body>
</html>
```

FILE: styles.css
```css
/* base */
html, body {
    margin: 0;
    height: 768px;
    width: 1366px;
    overflow: hidden;
}
body {
    display: flex;
    flex-direction: column;
    font-family: Roboto, "DejaVu Sans", sans-serif;
    color: #202124;
    background: #fff;
}
.sprite {
    position: absolute;
    width: 0;
    height: 0;
}
.ic {
    width: 20px;
    height: 20px;
    fill: #5f6368;
    flex: none;
}
a, i, em {
    font-style: normal;
}

/* ubuntu top bar */
.topbar {
    height: 27px;
    flex: none;
    display: flex;
    align-items: center;
    background: linear-gradient(#46453f, #3b3a35);
    color: #dfdbd2;
    font-family: "Noto Sans", "DejaVu Sans", sans-serif;
    font-size: 14px;
    font-weight: 600;
    position: relative;
}
.activities {
    margin-left: 12px;
    width: 88px;
    letter-spacing: .55px;
}
.app-menu {
    display: flex;
    align-items: center;
    gap: 6px;
}
.app-name {
    letter-spacing: .3px;
}
.app-chrome {
    width: 16px;
    height: 16px;
}
.tri {
    width: 0;
    height: 0;
    border-left: 5px solid transparent;
    border-right: 5px solid transparent;
    border-top: 5px solid #bdbab2;
}
.clock {
    position: absolute;
    left: 648px;
    font-family: "DejaVu Sans", sans-serif;
    font-size: 13px;
    letter-spacing: .2px;
}
.tray {
    margin-left: auto;
    display: flex;
    align-items: center;
    margin-right: 16px;
}
.lang {
    margin-right: 6px;
}
.tray svg {
    width: 17px;
    height: 17px;
    fill: #e8e6e1;
}
.tray-wifi {
    margin-left: 31px;
}
.tray-vol {
    margin-left: 10px;
}
.tray-bat {
    margin-left: 11px;
    margin-right: 10px;
}

/* chrome tabs */
.tabstrip {
    height: 34px;
    flex: none;
    display: flex;
    align-items: stretch;
    background: linear-gradient(#55564a, #3f3e39);
    font-family: "Noto Sans", "DejaVu Sans", sans-serif;
    font-size: 14px;
    color: #d3d2cd;
}
.tab {
    width: 240px;
    display: flex;
    align-items: center;
    flex: none;
    box-sizing: border-box;
    padding: 0 7px 2px 12px;
}
.tab-fb {
    width: 239px;
    margin-left: 8px;
}
.tab-third {
    width: 238px;
}
.tab-third .tab-title {
    margin-left: 7px;
}
.tab-active {
    background: #f2f1f0;
    color: #3b3a39;
    border-radius: 8px 8px 0 0;
}
.tab-title {
    flex: 1;
    overflow: hidden;
    white-space: nowrap;
    margin-left: 9px;
    -webkit-mask-image: linear-gradient(to left, transparent 0, #000 30px);
    mask-image: linear-gradient(to left, transparent 0, #000 30px);
}
.tab-x {
    width: 14px;
    height: 14px;
    fill: #d3d2cd;
    margin-left: 4px;
}
.tab-active .tab-x {
    fill: #4a4a4a;
}
.fav-fb {
    width: 16px;
    height: 16px;
    flex: none;
    border-radius: 50%;
    background: #3b5de0;
    color: #fff;
    font: bold 14px/18px "Liberation Sans", sans-serif;
    text-align: center;
    overflow: hidden;
}
.fav-m {
    width: 16px;
    height: 12px;
    flex: none;
}
.tab-sep {
    width: 1px;
    height: 20px;
    margin: 7px 0 0 0;
    background: #8a8a80;
}
.new-tab {
    width: 20px;
    height: 20px;
    fill: #eee;
    margin: 6px 0 0 12px;
}
.win-btns {
    margin-left: auto;
    display: flex;
    gap: 3px;
    align-items: center;
    margin-right: 3px;
}
.win-btn {
    width: 18px;
    height: 18px;
    border-radius: 50%;
    background: #6a6a60;
    border: 1px solid #4a4a44;
    box-sizing: border-box;
    display: flex;
    align-items: center;
    justify-content: center;
}
.win-close {
    background: #e8541e;
    color: #5c2a10;
    font: bold 10px "Liberation Sans", sans-serif;
}
.w-min {
    width: 8px;
    height: 1px;
    background: #38382f;
}
.w-max {
    width: 7px;
    height: 6px;
    border: 1px solid #38382f;
}

/* chrome toolbar */
.toolbar {
    height: 37px;
    flex: none;
    box-sizing: border-box;
    display: flex;
    align-items: center;
    background: #f2f1f0;
    border-bottom: 1px solid #d4d4d2;
    padding-left: 12px;
}
.nav-btn {
    margin-right: 12px;
}
.nav-off {
    fill: #b5b5b3;
}
.omnibox {
    width: 1118px;
    height: 28px;
    background: #fff;
    border-radius: 14px;
    display: flex;
    align-items: center;
    box-sizing: border-box;
    padding: 0 9px 0 11px;
    flex: none;
}
.omni-lock {
    width: 14px;
    height: 14px;
}
.url {
    margin-left: 9px;
    flex: 1;
    font-family: "Noto Sans", sans-serif;
    font-size: 14px;
    letter-spacing: -.23px;
    color: #6a6a6a;
    white-space: nowrap;
    overflow: hidden;
}
.url b {
    font-weight: 400;
    color: #202124;
}
.omni-star {
    width: 18px;
    height: 18px;
}
.ext-pic {
    width: 16px;
    height: 18px;
    margin-left: 14px;
    flex: none;
    display: flex;
}
.ext-puzzle {
    width: 18px;
    height: 18px;
    margin-left: 15px;
    fill: #3c4043;
}
.chrome-avatar {
    width: 22px;
    height: 22px;
    margin-left: 12px;
    border-radius: 50%;
    background: #0097a7;
    color: #fff;
    font-size: 13px;
    text-align: center;
    line-height: 20px;
    flex: none;
}
.chrome-more {
    margin-left: 12px;
    fill: #3c4043;
}

/* gmail header */
.gmail {
    flex: 1;
    display: flex;
    flex-direction: column;
    min-height: 0;
}
.g-head {
    height: 64px;
    flex: none;
    box-sizing: border-box;
    display: flex;
    align-items: center;
    border-bottom: 1px solid #eceded;
    padding: 3px 0 0 24px;
}
.g-menu {
    width: 24px;
    height: 24px;
}
.g-logo {
    width: 36px;
    height: 26px;
    margin-left: 18px;
    flex: none;
}
.g-word {
    width: 140px;
    margin-left: 14px;
    font-family: "Open Sans", sans-serif;
    font-size: 22px;
    letter-spacing: -.5px;
    color: #5f6368;
}
.g-search {
    width: 722px;
    height: 48px;
    background: #f1f3f4;
    border-radius: 8px;
    display: flex;
    align-items: center;
    box-sizing: border-box;
    padding-left: 16px;
    flex: none;
}
.g-search .ic {
    width: 24px;
    height: 24px;
}
.g-query {
    margin-left: 17px;
    flex: 1;
    font-size: 16px;
    letter-spacing: .12px;
}
.g-search .g-clear {
    margin-right: 27px;
}
.g-caret {
    width: 0;
    height: 0;
    border-left: 5px solid transparent;
    border-right: 5px solid transparent;
    border-top: 5px solid #5f6368;
    margin-right: 24px;
}
.g-act {
    width: 24px;
    height: 24px;
    margin-left: 20px;
}
.g-help {
    margin-left: 106px;
}
.g-account {
    width: 134px;
    height: 48px;
    margin-left: 20px;
    border: 1px solid #dadce0;
    border-radius: 8px;
    box-sizing: border-box;
    display: flex;
    align-items: center;
    flex: none;
    padding-left: 8px;
}
.fu-logo {
    width: 76px;
    height: 30px;
    display: flex;
}
.fu-mark {
    width: 38px;
    box-sizing: border-box;
    border: 1px solid #f7ee80;
    display: flex;
}
.fu-mail {
    width: 38px;
    background: #f7e000;
    color: #fff;
    font-size: 13px;
    font-weight: 700;
    text-align: center;
    line-height: 12px;
    padding-top: 6px;
    box-sizing: border-box;
}
.fu-mail small {
    display: block;
    font-size: 4px;
    line-height: 4px;
}
.acc-avatar {
    width: 32px;
    height: 32px;
    margin-left: 10px;
    border-radius: 50%;
    background: #0097a7;
    color: #fff;
    font-size: 18px;
    text-align: center;
    line-height: 30px;
}

/* layout under the header */
.g-main {
    flex: 1;
    display: flex;
    min-height: 0;
}
.sidebar {
    width: 256px;
    flex: none;
    display: flex;
    flex-direction: column;
    font-size: 14px;
}
.content {
    flex: 1;
    min-width: 0;
    display: flex;
    flex-direction: column;
}
.addons {
    width: 56px;
    flex: none;
    box-sizing: border-box;
    border-left: 1px solid #eceded;
    display: flex;
    flex-direction: column;
    align-items: center;
    padding: 19px 0 0 3px;
}

/* sidebar */
.compose {
    width: 145px;
    height: 48px;
    box-sizing: border-box;
    margin: 17px 0 0 8px;
    border-radius: 24px;
    display: flex;
    align-items: center;
    gap: 16px;
    padding-left: 16px;
    box-shadow: 0 1px 2px rgba(60, 64, 67, .3), 0 1px 4px 1px rgba(60, 64, 67, .2);
    font-family: "Open Sans", sans-serif;
    font-weight: 500;
    font-size: 14px;
    letter-spacing: .1px;
    color: #3c4043;
}
.compose span {
    margin-top: -2px;
}
.compose-plus {
    width: 24px;
    height: 24px;
}
.nav {
    margin-top: 16px;
}
.nav-row {
    height: 32px;
    display: flex;
    align-items: center;
    padding: 0 28px 0 26px;
    color: #202124;
    letter-spacing: .18px;
}
.nav-row .ic {
    margin-right: 18px;
    fill: #707070;
}
.nav-row span {
    flex: 1;
}
.nav-row em {
    font-size: 12px;
    color: #5f6368;
    letter-spacing: .3px;
}
.strong span {
    font-weight: 700;
}
.meet {
    margin-top: 37px;
    border-top: 1px solid #eceded;
    border-bottom: 1px solid #eceded;
    height: 110px;
}
.sidebar h3 {
    margin: 0;
    padding-left: 26px;
    height: 22px;
    line-height: 22px;
    font-size: 14px;
    font-weight: 500;
    color: #202124;
}
.sidebar .meet h3 {
    margin: 11px 0 6px;
}
.sidebar .chat h3 {
    margin-top: 12px;
}
.chat {
    flex: 1;
    min-height: 0;
}
.chat-me {
    height: 28px;
    margin: 6px 0 0 23px;
    display: flex;
    align-items: center;
    font-size: 13px;
}
.me-pic {
    width: 28px;
    height: 28px;
    position: relative;
    flex: none;
}
.me-dot {
    position: absolute;
    right: -3px;
    bottom: -3px;
    width: 10px;
    height: 10px;
    border-radius: 50%;
    background: #0eb80e;
}
.me-name {
    margin: 0 0 2px 5px;
    color: #3c4043;
}
.me-caret {
    margin: 0 0 0 5px;
    width: 0;
    height: 0;
    border-left: 4px solid transparent;
    border-right: 4px solid transparent;
    border-top: 4px solid #b0b0b0;
}
.me-add {
    margin-left: auto;
    margin-right: 22px;
    fill: #8a8a8a;
}
.chat-list {
    height: 28px;
    margin: 11px 16px 0 23px;
    border-top: 1px solid #e4e4e4;
    display: flex;
    overflow: hidden;
    font-size: 13px;
}
.chat-msgs {
    flex: 1;
    padding: 0 0 0 59px;
}
.chat-msgs p {
    margin: 0;
    line-height: 18px;
    color: #80868b;
}
.chat-msgs a {
    line-height: 17px;
    color: #6200ea;
}
.chat-scroll {
    width: 8px;
    background: #c2c2c2;
}
.side-tabs {
    height: 33px;
    flex: none;
    box-sizing: border-box;
    border-top: 1px solid #e4e4e4;
    display: flex;
    padding-left: 72px;
}
.side-tabs span {
    width: 37px;
    display: flex;
    align-items: center;
    justify-content: center;
}
.side-tabs svg {
    width: 20px;
    height: 20px;
    fill: #858585;
}
.side-tabs .on {
    background: #f2f2f2;
}

/* conversation toolbar */
.actions {
    height: 49px;
    flex: none;
    box-sizing: border-box;
    margin-right: 16px;
    border-bottom: 1px solid #eceded;
    display: flex;
    align-items: center;
    padding: 2px 0 0 4px;
    font-size: 12px;
    letter-spacing: .3px;
    color: #5f6368;
}
.btn {
    width: 44px;
    height: 46px;
    display: flex;
    align-items: center;
    justify-content: center;
    flex: none;
}
.btn-back {
    margin-right: 12px;
}
.btn-more {
    width: 36px;
}
.btn-page {
    width: 40px;
}
.act-sep {
    width: 1px;
    height: 20px;
    margin: 0 8px 0 7px;
    background: #e6e6e6;
}
.count {
    margin-left: auto;
    margin-right: 10px;
}
.actions .btn-page:last-child {
    margin-right: 6px;
}

/* thread */
.thread-wrap {
    flex: 1;
    min-height: 0;
    display: flex;
}
.thread {
    flex: 1;
    min-width: 0;
    overflow: hidden;
}
.scroll-track {
    width: 11px;
    flex: none;
}
.scroll-thumb {
    display: block;
    height: 244px;
    background: #c8c8c8;
    border-bottom: 1px solid #aaa;
    box-sizing: border-box;
}
.subject-row {
    height: 76px;
    box-sizing: border-box;
    display: flex;
    align-items: center;
    padding: 0 21px 8px 72px;
}
.subject-row h2 {
    margin: 0;
    font-family: Roboto, "DejaVu Sans", sans-serif;
    font-size: 21px;
    font-weight: 400;
}
.chip {
    margin-left: 11px;
    background: #ddd;
    border-radius: 3px;
    color: #666;
    font-size: 12px;
    letter-spacing: .3px;
    height: 18px;
    line-height: 18px;
    padding: 0 4px 0 5px;
}
.chip i {
    margin-left: 2px;
    color: #555;
    font-size: 15px;
}
.sub-tools {
    margin-left: auto;
    display: flex;
    gap: 16px;
}
.message {
    display: flex;
    padding-left: 16px;
}
.sender-pic {
    width: 40px;
    height: 40px;
    margin-right: 16px;
    border-radius: 50%;
    box-sizing: border-box;
    background: #f5f5f5;
    border: 1px solid #ececec;
    display: flex;
    align-items: center;
    justify-content: center;
    flex: none;
}
.sender-pic .ic {
    fill: #c8c8c8;
    width: 22px;
    height: 22px;
}
.msg-main {
    width: 950px;
    flex: none;
}
.from-row {
    height: 20px;
    display: flex;
    align-items: center;
}
.sender {
    font-size: 14px;
    font-weight: 700;
}
.clip {
    margin-left: auto;
    width: 22px;
    height: 22px;
    fill: #757575;
}
.date {
    margin-left: 5px;
    font-size: 12px;
    letter-spacing: .28px;
    color: #5f6368;
}
.msg-star,
.msg-reply,
.msg-more {
    margin-left: 20px;
}
.to-row {
    height: 20px;
    display: flex;
    align-items: center;
    font-size: 12px;
    letter-spacing: .28px;
    color: #5f6368;
    white-space: nowrap;
}
.to-caret {
    width: 0;
    height: 0;
    margin-left: 11px;
    border-left: 4px solid transparent;
    border-right: 4px solid transparent;
    border-top: 4px solid #5f6368;
}
.translate {
    height: 34px;
    box-sizing: border-box;
    margin-top: 8px;
    border-top: 1px solid #eceded;
    border-bottom: 1px solid #eceded;
    display: flex;
    align-items: center;
    font-size: 14px;
    color: #5f6368;
}
.tr-icon {
    margin-left: 10px;
}
.tr-from {
    margin-left: 10px;
}
.tr-to {
    letter-spacing: .2px;
}
.tr-caret {
    width: 0;
    height: 0;
    margin: 0 0 0 6px;
    border-left: 4px solid transparent;
    border-right: 4px solid transparent;
    border-top: 4px solid #5f6368;
}
.tr-arrow {
    margin: 0 10px 0 16px;
}
.tr-link {
    margin-left: 16px;
    font-size: 13px;
    letter-spacing: -.1px;
    color: #6200ea;
}
.tr-off {
    margin-left: auto;
}
.tr-x {
    width: 14px;
    height: 14px;
    margin: 0 14px 0 3px;
    fill: #9aa0a6;
}
.body {
    margin-top: 6px;
    font-family: "Liberation Sans", "DejaVu Sans", sans-serif;
    font-size: 13px;
    line-height: 19px;
    color: #222;
    padding-bottom: 15px;
    border-bottom: 1px dotted #c4c4c4;
}
.red {
    color: #f00;
    font-family: "Liberation Serif", "DejaVu Sans", serif;
    font-size: 13.33px;
}
.sig {
    color: #888;
}
.hl {
    color: #222;
    background: #ffffcc;
    text-decoration: underline;
}
.site {
    color: #6200ea;
    text-decoration: underline;
}
.attach {
    display: flex;
    align-items: center;
    height: 44px;
    font-size: 14px;
}
.attach b {
    flex: 1;
}
.att-dl {
    fill: #aaa;
}
.att-drive {
    fill: #aaa;
    margin: 0 0 0 20px;
}

/* right panel */
.addon {
    width: 18px;
    height: 18px;
    display: flex;
    margin-bottom: 38px;
}
.addon-hr {
    width: 20px;
    height: 1px;
    background: #e0e0e0;
    margin: -3px 0 35px;
}
.addon-zoom {
    width: 20px;
    height: 20px;
    margin-bottom: 36px;
}
.cal-num {
    fill: #fff;
    font: 9px Roboto, sans-serif;
}
.addon-plus {
    fill: #757575;
}
.addon-chev {
    margin-top: auto;
    margin-bottom: 18px;
    margin-left: -3px;
}

/* dock */
.dock {
    height: 43px;
    flex: none;
    display: flex;
    align-items: center;
    background: linear-gradient(to right, #473338, #533a34);
    padding-left: 2px;
    gap: 4px;
}
.dock-item {
    width: 40px;
    height: 40px;
    border-radius: 4px;
    display: flex;
    align-items: center;
    justify-content: center;
    position: relative;
    flex: none;
}
.dock-item svg {
    width: 26px;
    height: 26px;
}
.dock-on {
    background: rgba(255, 255, 255, .14);
}
.dock-dot {
    position: absolute;
    bottom: 0;
    left: 18px;
    width: 4px;
    height: 4px;
    border-radius: 50%;
    background: #e9541f;
}
.help-q {
    fill: #fff;
    font: bold 24px "Liberation Sans", sans-serif;
}
.ij {
    fill: #fff;
    font: bold 13px "Liberation Sans", sans-serif;
}
.dock-grid {
    margin-left: auto;
    margin-right: 12px;
    fill: #f0ebe8;
}
```
